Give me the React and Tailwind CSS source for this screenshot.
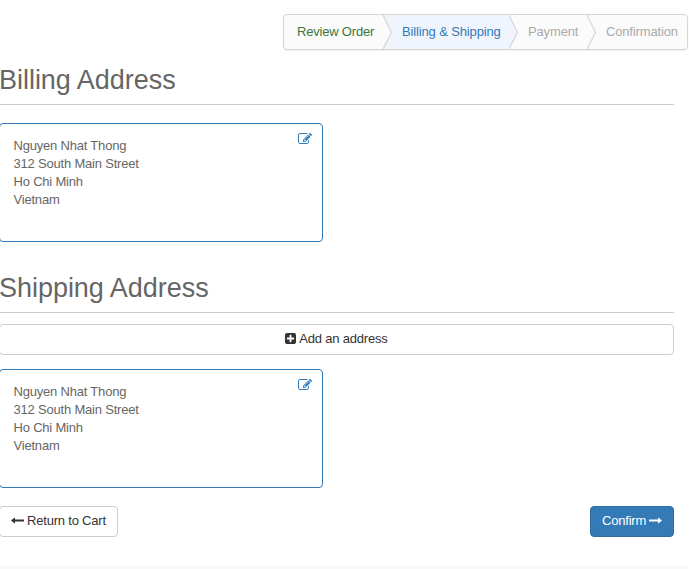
import React from "react";

function EditIcon() {
  return (
    <svg viewBox="0 0 1792 1792" className="h-[14px] w-[14px] fill-[#337ab7]">
      <path d="M888 1184l116-116-152-152-116 116v56h96v96h56zm440-720q-16-16-33 1l-350 350q-17 17-1 33t33-1l350-350q17-17 1-33zm80 594v190q0 119-84.5 203.5t-203.5 84.5h-832q-119 0-203.5-84.5t-84.5-203.5v-832q0-119 84.5-203.5t203.5-84.5h832q63 0 117 25 15 7 18 23 3 17-9 29l-49 49q-14 14-32 8-23-6-45-6h-832q-66 0-113 47t-47 113v832q0 66 47 113t113 47h832q66 0 113-47t47-113v-126q0-13 9-22l64-64q15-15 35-7t20 29zm-96-738l288 288-672 672h-288v-288zm444 132l-92 92-288-288 92-92q28-28 68-28t68 28l152 152q28 28 28 68t-28 68z" />
    </svg>
  );
}

function PlusSquareIcon() {
  return (
    <svg viewBox="128 128 1536 1536" className="mb-[2px] h-[11px] w-[11px] fill-[#333]">
      <path d="M1408 960v-128q0-26-19-45t-45-19h-320v-320q0-26-19-45t-45-19h-128q-26 0-45 19t-19 45v320h-320q-26 0-45 19t-19 45v128q0 26 19 45t45 19h320v320q0 26 19 45t45 19h128q26 0 45-19t19-45v-320h320q26 0 45-19t19-45zm256-544v960q0 119-84.5 203.5t-203.5 84.5h-960q-119 0-203.5-84.5t-84.5-203.5v-960q0-119 84.5-203.5t203.5-84.5h960q119 0 203.5 84.5t84.5 203.5z" />
    </svg>
  );
}

function LongArrow({ className }) {
  return (
    <svg viewBox="0 0 13 7" className={`mb-[2px] h-[7px] w-[13px] fill-current ${className}`}>
      <path d="M0 3.5 3.4.8q.6-.4.6.3v1.5h8.7q.3 0 .3.3v1.2q0 .3-.3.3H4v1.5q0 .7-.6.3z" />
    </svg>
  );
}

function Chevron({ left, right }) {
  return (
    <svg viewBox="0 0 9 34" className="h-[34px] w-[9px] shrink-0">
      <rect width="9" height="34" fill={right} />
      <path d="M0 0 8.5 17.5 0 34z" fill={left} />
      <path d="M0 0 8.5 17.5 0 34" fill="none" stroke="#d4d4d4" strokeWidth="1.2" />
    </svg>
  );
}

function Heading({ children }) {
  return (
    <h2 className="h-[39px] w-[674px] border-b border-[#c9c9c9] pt-px text-[27px] leading-[27px] tracking-[-0.03px] text-[#666]">
      <span className="-ml-px">{children}</span>
    </h2>
  );
}

function AddressCard() {
  return (
    <div className="-ml-px flex h-[119px] w-[324px] justify-between rounded-[4px] border border-[#337ab7] pt-[13px] pr-[10px] pl-[13.5px] leading-[18px] tracking-[-0.2px] text-[#666]">
      <address className="not-italic">
        Nguyen Nhat Thong
        <br />
        312 South Main Street
        <br />
        Ho Chi Minh
        <br />
        Vietnam
      </address>
      <a href="#edit" aria-label="Edit" className="-mt-[5px]">
        <EditIcon />
      </a>
    </div>
  );
}

export default function App() {
  return (
    <div className="h-[569px] w-[689px] overflow-hidden bg-white pt-[14px] font-['Liberation_Sans',Arial,sans-serif] text-[13px]">
      <nav className="ml-[283px] flex h-[36px] w-[405px] overflow-hidden rounded-[4px] border border-[#d4d4d4] bg-[#fbfbfb] leading-[34px] whitespace-nowrap shadow-[0_1px_2px_rgba(0,0,0,0.06)]">
        <span className="w-[99px] shrink-0 pl-[13px] tracking-[-0.2px] text-[#3c763d]">Review Order</span>
        <Chevron left="#fbfbfb" right="#f0f5fd" />
        <span className="w-[117px] shrink-0 bg-[#f0f5fd] pl-[10px] tracking-[-0.14px] text-[#337ab7]">Billing &amp; Shipping</span>
        <Chevron left="#f0f5fd" right="#fbfbfb" />
        <span className="w-[69px] shrink-0 pl-[10px] tracking-[-0.14px] text-[#aaa]">Payment</span>
        <Chevron left="#fbfbfb" right="#fbfbfb" />
        <span className="pl-[10px] tracking-[-0.16px] text-[#aaa]">Confirmation</span>
      </nav>
      <main className="pt-4">
        <Heading>Billing Address</Heading>
        <div className="pt-[18px]">
          <AddressCard />
        </div>
        <div className="pt-8">
          <Heading>Shipping Address</Heading>
        </div>
        <button className="mt-[11px] -ml-px flex h-[31px] w-[675px] items-center justify-center gap-[3px] rounded-[4px] border border-[#ccc] pb-px tracking-[-0.2px] text-[#333]">
          <PlusSquareIcon />
          <span>Add an address</span>
        </button>
        <div className="pt-[14px]">
          <AddressCard />
        </div>
        <div className="flex w-[674px] justify-between pt-[18px]">
          <button className="-ml-px flex h-[31px] w-[119px] items-center gap-[3px] rounded-[4px] border border-[#ccc] pb-px pl-[11px] tracking-[-0.2px] whitespace-nowrap text-[#333]">
            <LongArrow className="" />
            <span>Return to Cart</span>
          </button>
          <button className="flex h-[31px] w-[84px] items-center gap-[3px] rounded-[4px] border border-[#2e6da4] bg-[#337ab7] pb-px pl-[11px] tracking-[-0.2px] text-white">
            <span>Confirm</span>
            <LongArrow className="rotate-180" />
          </button>
        </div>
      </main>
      <footer className="mt-[29px] h-[3px] w-[688px] bg-[#f8f8f8]" />
    </div>
  );
}
